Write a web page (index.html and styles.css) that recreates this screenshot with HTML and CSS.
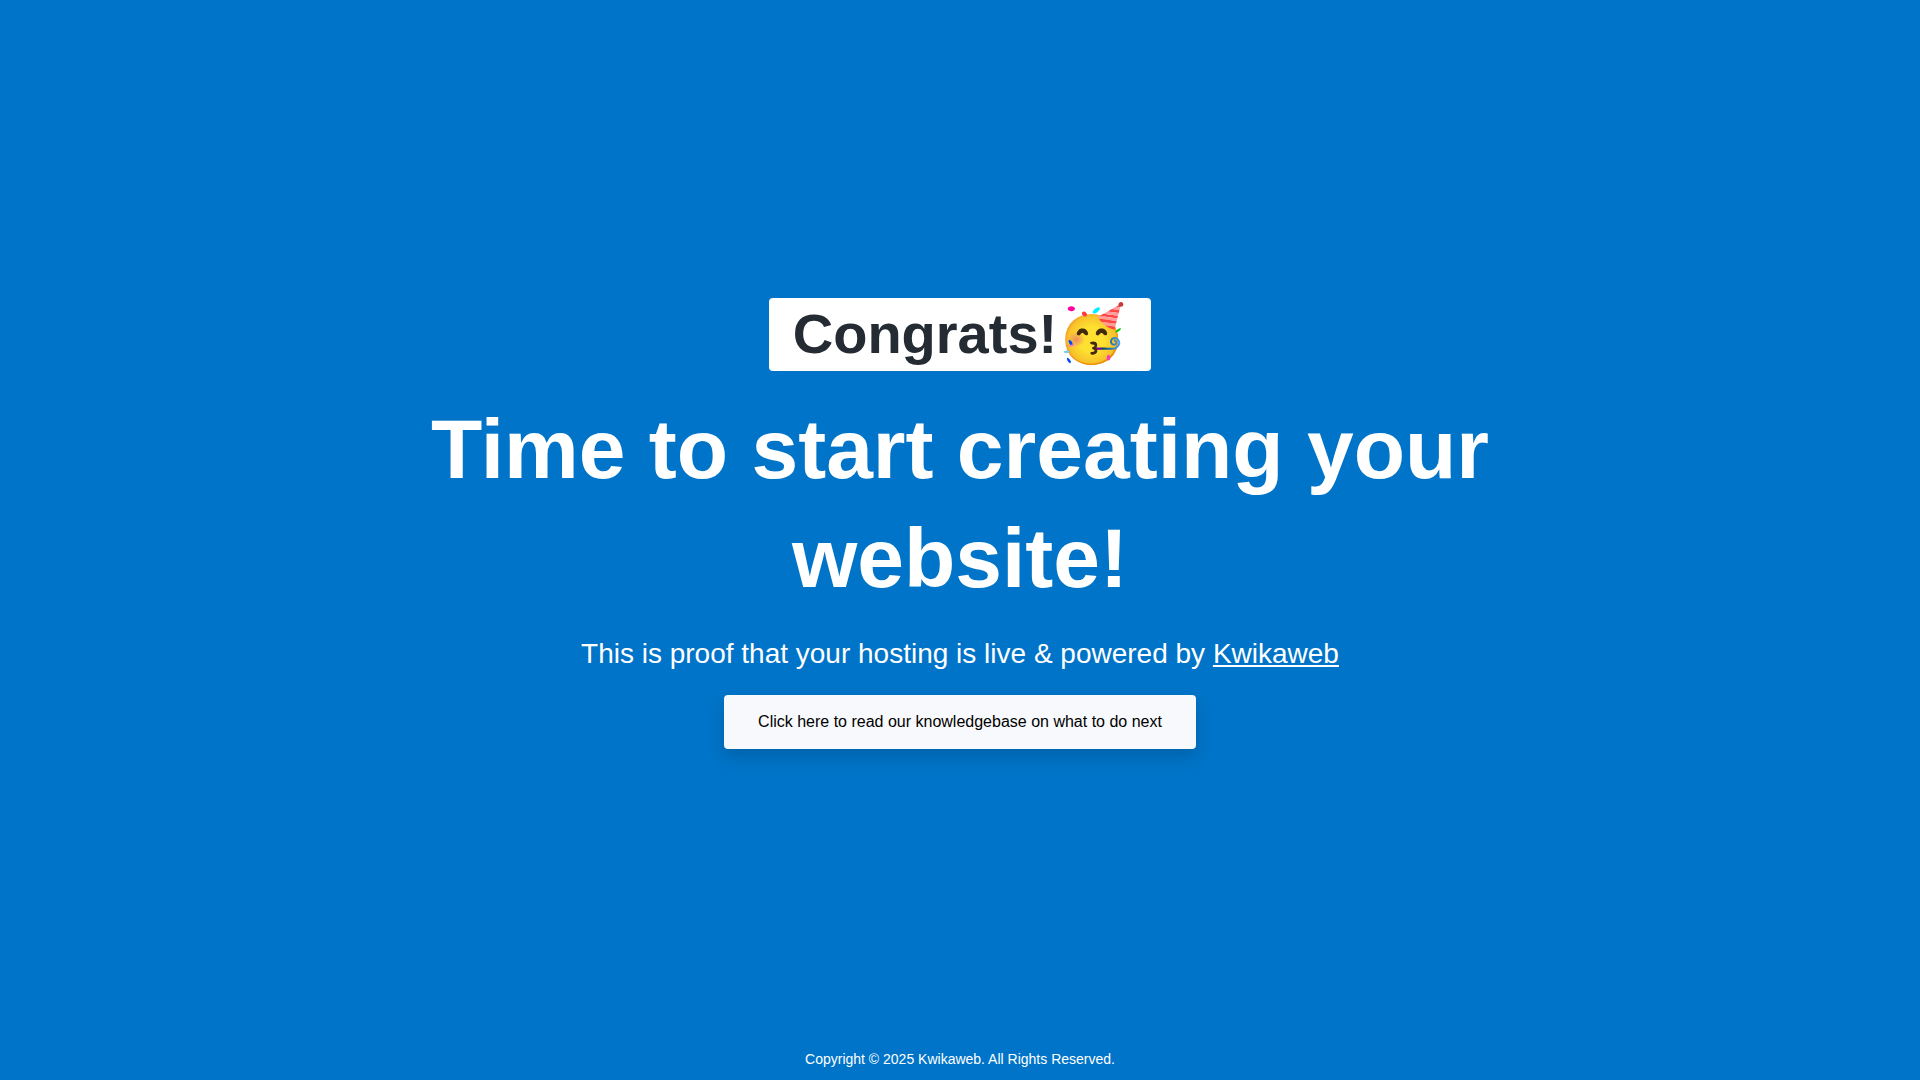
FILE: index.html
```html
<!DOCTYPE html>
<html lang="en">
<head>
  <meta charset="UTF-8" />
  <title>Kwikaweb</title>
  <meta name="viewport" content="width=device-width, initial-scale=1" />
  <link rel="stylesheet" href="styles.css">
</head>
<body>
  <main class="hero">
    <h2 class="badge">Congrats!🥳</h2>
    <h1 class="title">Time to start creating your website!</h1>
    <p class="lead">This is proof that your hosting is live &amp; powered by <a href="#">Kwikaweb</a></p>
    <a class="button" href="#">Click here to read our knowledgebase on what to do next</a>
  </main>
  <footer class="footer">Copyright © 2025 Kwikaweb. All Rights Reserved.</footer>
</body>
</html>
```
FILE: styles.css
```css
* {
  box-sizing: border-box;
}
body {
  display: flex;
  flex-direction: column;
  min-height: 100vh;
  margin: 0;
  background: #0074c8;
  color: #fff;
  font-family: "Liberation Sans", Arial, sans-serif;
}
.hero {
  flex: 1;
  display: flex;
  flex-direction: column;
  align-items: center;
  justify-content: center;
  width: 100%;
  max-width: 1140px;
  margin: 0 auto;
  padding: 8px 16px 0;
  text-align: center;
}
.badge {
  margin: 0 0 24px;
  padding: 0 24px 2px;
  background: #fff;
  border-radius: 4px;
  color: #242b33;
  font-size: 56px;
  line-height: 71px;
}
.title {
  margin: 0 0 20px;
  font-size: 84px;
  line-height: 109px;
}
.lead {
  margin: 0 0 20px;
  font-size: 28px;
  line-height: 42px;
}
.lead a {
  color: #fff;
}
.button {
  padding: 15px 34px;
  background: #f8f9fc;
  border-radius: 4px;
  box-shadow: 0 8px 16px rgba(0, 0, 0, 0.15);
  color: #000;
  font-size: 16px;
  line-height: 24px;
  text-decoration: none;
}
.footer {
  padding: 10px;
  font-size: 14px;
  line-height: 22px;
  text-align: center;
}
```
